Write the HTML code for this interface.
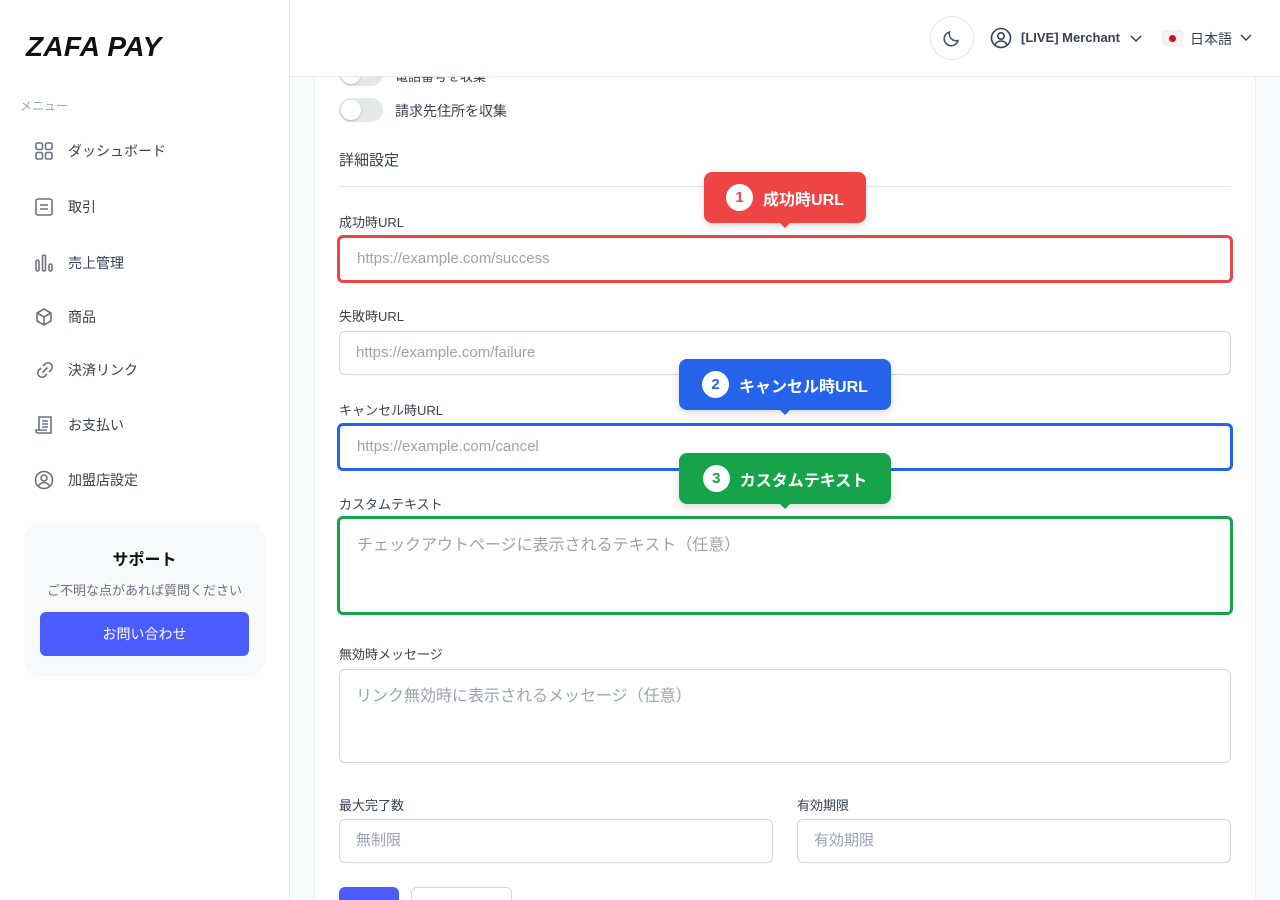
<!DOCTYPE html>
<html><head><meta charset="utf-8"><style>
*{box-sizing:border-box;margin:0;padding:0}
html{width:1280px;height:900px;overflow:hidden}
body{width:1280px;height:900px;overflow:hidden;font-family:"Liberation Sans","Noto Sans CJK JP",sans-serif;color:#1f2937;background:#f8f9fb;position:relative}
.sb{position:absolute;left:0;top:0;width:290px;height:900px;background:#fff;border-right:1px solid #e5e7eb}
.logo{position:absolute;left:26px;top:31px;font-size:28px;font-weight:900;font-style:italic;letter-spacing:0.3px;color:#111}
.menu{position:absolute;left:20px;top:97px;font-size:12px;color:#9ca3af}
.it{position:absolute;left:34px;display:flex;align-items:center;font-size:14px;color:#374151}
.it svg{width:20px;height:20px;margin-right:14px;stroke:#6b7280;fill:none;stroke-width:1.6}
.sup{position:absolute;left:24px;top:523px;width:241px;height:153px;background:#f8f9fb;border-radius:16px;text-align:center}
.sup h4{margin-top:23px;font-size:16px;font-weight:700;color:#111}
.sup p{margin-top:10px;font-size:13px;color:#6b7280}
.sup .b{position:absolute;left:16px;top:89px;width:209px;height:44px;background:#4a5cff;border-radius:6px;color:#fff;font-size:14px;line-height:44px}
.hd{position:absolute;left:290px;top:0;width:990px;height:77px;background:#fff;border-bottom:1px solid #e5e7eb;z-index:5}
.card{position:absolute;left:314px;top:0;width:942px;height:900px;background:#fff;border-left:1px solid #eef0f3;border-right:1px solid #eef0f3}
.lbl{position:absolute;left:339px;font-size:13px;color:#374151}
.in{position:absolute;left:339px;width:892px;height:44px;border:1px solid #d1d5db;border-radius:6px;background:#fff;font-size:15px;color:#9ca3af;padding:0 16px;line-height:42px}
.ta{height:94px;line-height:normal;padding-top:12px;font-size:16px}
.tog{position:absolute;left:339px;width:44px;height:24px;border-radius:12px;background:#e5e7eb}
.tog:after{content:"";position:absolute;left:2px;top:2px;width:20px;height:20px;border-radius:50%;background:#fff;box-shadow:0 1px 2px rgba(0,0,0,.2)}
.co{position:absolute;height:51px;border-radius:8px;color:#fff;font-weight:700;font-size:16px;display:flex;align-items:center;justify-content:center;box-shadow:0 3px 8px rgba(0,0,0,.15);z-index:3}
.co i{font-style:normal;width:27px;height:27px;border-radius:50%;background:#fff;display:inline-block;text-align:center;line-height:27px;font-size:15px;margin-right:10px}
.co:after{content:"";position:absolute;left:50%;margin-left:-6px;bottom:-11px;border:6px solid transparent;border-top:6px solid var(--c)}
</style></head><body>
<div class="sb">
<div class="logo">ZAFA PAY</div>
<div class="menu">メニュー</div>
<div class="it" style="top:141px"><svg viewBox="0 0 20 20"><rect x="2" y="2" width="6.5" height="6.5" rx="1.5"/><rect x="11.5" y="2" width="6.5" height="6.5" rx="1.5"/><rect x="2" y="11.5" width="6.5" height="6.5" rx="1.5"/><rect x="11.5" y="11.5" width="6.5" height="6.5" rx="1.5"/></svg>ダッシュボード</div>
<div class="it" style="top:197px"><svg viewBox="0 0 20 20"><rect x="2" y="2" width="16" height="16" rx="2"/><path d="M6 8h8M6 12h8"/></svg>取引</div>
<div class="it" style="top:253px"><svg viewBox="0 0 20 20"><rect x="2" y="7" width="3" height="11" rx="1.5"/><rect x="8.5" y="2" width="3" height="16" rx="1.5"/><rect x="15" y="11" width="3" height="7" rx="1.5"/></svg>売上管理</div>
<div class="it" style="top:307px"><svg viewBox="0 0 20 20"><path d="M10 2l7 4v8l-7 4-7-4V6z"/><path d="M3 6l7 4 7-4M10 10v8"/></svg>商品</div>
<div class="it" style="top:359px"><svg viewBox="0 0 22 22" style="width:22px;height:22px;margin-right:12px"><path d="M8.5 13.5l5-5M9 7l2-2a4 4 0 016 6l-2 2M13 15l-2 2a4 4 0 01-6-6l2-2"/></svg>決済リンク</div>
<div class="it" style="top:415px"><svg viewBox="0 0 20 20"><path d="M5 15V2h12v16H4a2 2 0 01-2-2v-1h11"/><path d="M8 6h6M8 9h6M8 12h6"/></svg>お支払い</div>
<div class="it" style="top:470px"><svg viewBox="0 0 20 20"><circle cx="10" cy="10" r="8.5"/><circle cx="10" cy="8" r="3"/><path d="M4.5 16c1.5-2.5 3.5-3.5 5.5-3.5s4 1 5.5 3.5"/></svg>加盟店設定</div>
<div class="sup"><h4>サポート</h4><p>ご不明な点があれば質問ください</p><div class="b">お問い合わせ</div></div>
</div>
<div class="card">
</div>
<div class="hd">
<div style="position:absolute;left:640px;top:16px;width:44px;height:44px;border:1px solid #e5e7eb;border-radius:50%"><svg viewBox="0 0 20 20" width="20" height="20" style="position:absolute;left:11px;top:11px" fill="none" stroke="#4b5563" stroke-width="1.6"><path d="M16 12.5A7 7 0 017.5 4a7 7 0 108.5 8.5z"/></svg></div>
<svg viewBox="0 0 22 22" width="22" height="22" style="position:absolute;left:700px;top:27px" fill="none" stroke="#374151" stroke-width="1.6"><circle cx="11" cy="11" r="9.5"/><circle cx="11" cy="9" r="3.2"/><path d="M5 17.5c1.5-2.5 3.7-3.5 6-3.5s4.5 1 6 3.5"/></svg>
<div style="position:absolute;left:731px;top:30px;font-size:13px;font-weight:700;color:#374151">[LIVE] Merchant</div>
<svg width="12" height="8" style="position:absolute;left:840px;top:35px" fill="none" stroke="#374151" stroke-width="1.5"><path d="M1 1l5 5 5-5"/></svg>
<div style="position:absolute;left:873px;top:31px;width:19px;height:14px;background:#f3f3f3;border-radius:2px;box-shadow:0 0 1px #999"><div style="position:absolute;left:6px;top:4px;width:7px;height:7px;border-radius:50%;background:#d0102b"></div></div>
<div style="position:absolute;left:900px;top:29px;font-size:14px;color:#374151">日本語</div>
<svg width="12" height="8" style="position:absolute;left:950px;top:34px" fill="none" stroke="#374151" stroke-width="1.5"><path d="M1 1l5 5 5-5"/></svg>
</div>
<div class="tog" style="top:62px"></div><div class="lbl" style="left:395px;top:66px">電話番号を収集</div>
<div class="tog" style="top:98px"></div><div class="lbl" style="left:395px;top:101px;font-size:14px">請求先住所を収集</div>
<div class="lbl" style="top:149px;font-size:15px">詳細設定</div>
<div style="position:absolute;left:339px;top:186px;width:892px;height:1px;background:#e5e7eb"></div>
<div class="lbl" style="top:212px">成功時URL</div>
<div class="in" style="top:235px;left:337px;width:896px;height:48px;border:3px solid #ef4444;padding-left:17px">https://example.com/success</div>
<div class="lbl" style="top:306px">失敗時URL</div>
<div class="in" style="top:331px">https://example.com/failure</div>
<div class="lbl" style="top:400px">キャンセル時URL</div>
<div class="in" style="top:423px;left:337px;width:896px;height:48px;border:3px solid #2563eb;padding-left:17px">https://example.com/cancel</div>
<div class="lbl" style="top:494px">カスタムテキスト</div>
<div class="in ta" style="top:516px;left:337px;width:896px;height:99px;border:3px solid #16a34a;padding-left:17px">チェックアウトページに表示されるテキスト（任意）</div>
<div class="lbl" style="top:644px">無効時メッセージ</div>
<div class="in ta" style="top:669px">リンク無効時に表示されるメッセージ（任意）</div>
<div class="lbl" style="top:795px">最大完了数</div>
<div class="lbl" style="left:797px;top:795px">有効期限</div>
<div class="in" style="top:819px;width:434px">無制限</div>
<div class="in" style="left:797px;top:819px;width:434px">有効期限</div>
<div style="position:absolute;left:339px;top:887px;width:60px;height:13px;background:#4a5cff;border-radius:6px 6px 0 0"></div>
<div style="position:absolute;left:411px;top:887px;width:101px;height:13px;border:1px solid #d1d5db;border-bottom:none;border-radius:6px 6px 0 0;background:#fff"></div>
<div class="co" style="--c:#ef4444;background:#ef4444;left:704px;top:172px;width:162px"><i style="color:#ef4444">1</i>成功時URL</div>
<div class="co" style="--c:#2563eb;background:#2563eb;left:679px;top:359px;width:212px"><i style="color:#2563eb">2</i>キャンセル時URL</div>
<div class="co" style="--c:#16a34a;background:#16a34a;left:679px;top:453px;width:212px"><i style="color:#16a34a">3</i>カスタムテキスト</div>
</body></html>
